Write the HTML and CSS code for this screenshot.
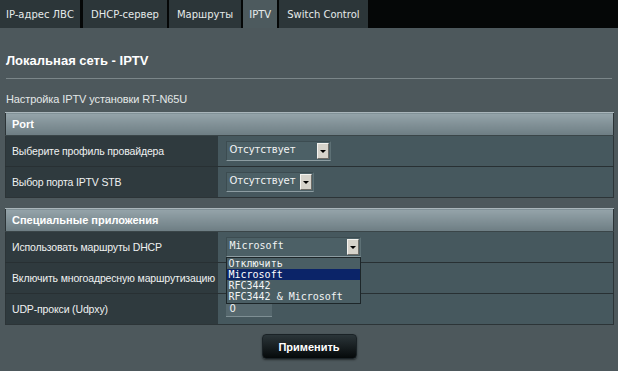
FILE: index.html
```html
<!DOCTYPE html>
<html lang="ru">
<head>
<meta charset="utf-8">
<title>Локальная сеть - IPTV</title>
<link rel="stylesheet" href="styles.css">
</head>
<body>
<div class="tabs">
  <div class="tab">IP-адрес ЛВС</div>
  <div class="tab">DHCP-сервер</div>
  <div class="tab">Маршруты</div>
  <div class="tab active">IPTV</div>
  <div class="tab">Switch Control</div>
</div>
<div class="content">
  <h1 class="title">Локальная сеть - IPTV</h1>
  <div class="rule"></div>
  <p class="desc">Настройка IPTV установки RT-N65U</p>

  <table class="form">
    <colgroup><col class="c-label"><col class="c-value"></colgroup>
    <thead><tr><th colspan="2">Port</th></tr></thead>
    <tbody>
      <tr>
        <td class="label">Выберите профиль провайдера</td>
        <td class="value"><div class="select s-prof"><span class="sel-text">Отсутствует</span><span class="sel-btn"><span class="arrow"></span></span></div></td>
      </tr>
      <tr>
        <td class="label">Выбор порта IPTV STB</td>
        <td class="value"><div class="select s-port"><span class="sel-text">Отсутствует</span><span class="sel-btn"><span class="arrow"></span></span></div></td>
      </tr>
    </tbody>
  </table>

  <table class="form second">
    <colgroup><col class="c-label"><col class="c-value"></colgroup>
    <thead><tr><th colspan="2">Специальные приложения</th></tr></thead>
    <tbody>
      <tr>
        <td class="label">Использовать маршруты DHCP</td>
        <td class="value">
          <div class="select s-dhcp mono"><span class="sel-text">Microsoft</span><span class="sel-btn"><span class="arrow"></span></span>
            <ul class="dropdown">
              <li>Отключить</li>
              <li class="hl">Microsoft</li>
              <li>RFC3442</li>
              <li>RFC3442 &amp; Microsoft</li>
            </ul>
          </div>
        </td>
      </tr>
      <tr>
        <td class="label">Включить многоадресную маршрутизацию</td>
        <td class="value"></td>
      </tr>
      <tr>
        <td class="label">UDP-прокси (Udpxy)</td>
        <td class="value"><div class="input">0</div></td>
      </tr>
    </tbody>
  </table>

  <div class="actions"><button class="apply">Применить</button></div>
</div>
</body>
</html>
```
FILE: styles.css
```css
html, body {
  margin: 0;
  padding: 0;
  background: #4d585c;
  width: 618px;
  height: 371px;
  overflow: hidden;
  font-family: "Liberation Sans", Arial, sans-serif;
  color: #e8ecec;
}

.tabs {
  display: flex;
  gap: 2px;
  height: 28px;
  background: #050707;
}
.tab {
  display: flex;
  align-items: center;
  padding: 0 8px;
  background: #2c3639;
  color: #e6eaea;
  font-family: "DejaVu Sans", Verdana, sans-serif;
  font-size: 10px;
  white-space: nowrap;
}
.tab:first-child { margin-right: 1px; padding: 0 6px; }
.tab.active { background: #4d5a5e; padding: 0 6px; }

.content {
  padding: 0 0 0 5px;
}
.title {
  margin: 0;
  padding: 25px 0 0 1px;
  height: 23px;
  font-size: 13px;
  font-weight: bold;
  color: #ffffff;
  line-height: 16px;
}
.rule {
  height: 1px;
  background: #7b8689;
  margin: 2px 6px 0 1px;
}
.desc {
  margin: 0;
  padding: 14px 0 0 1px;
  height: 19px;
  font-size: 11px;
  line-height: 13px;
  color: #e4e8e8;
  letter-spacing: -0.1px;
}

.form {
  width: 609px;
  table-layout: fixed;
  border-collapse: collapse;
  border: 1px solid #2c3437;
  margin: 0;
}
.c-label { width: 212px; }
.form.second { margin-top: 10px; }
.form th {
  height: 22px;
  padding: 0 0 0 6px;
  text-align: left;
  font-size: 11px;
  font-weight: bold;
  color: #ffffff;
  background: linear-gradient(#95a4aa, #6d7d83);
  border-top: 1px solid #a9b5ba;
  border-bottom: 1px solid #3a4548;
}
.form td {
  height: 30px;
  padding: 0;
  border-top: 1px solid #283033;
  font-size: 10.5px;
  color: #eef1f1;
  letter-spacing: -0.15px;
}
.form td.label {
  padding-left: 6px;
  background: #2f3a3e;
  white-space: nowrap;
  overflow: hidden;
}
.form td.value {
  background: #46585e;
  padding-left: 8px;
  vertical-align: middle;
  letter-spacing: 0;
}

.select {
  position: relative;
  display: flex;
  align-items: center;
  height: 18px;
  background: #4c6066;
  border-top: 1px solid #3c4c51;
  border-left: 1px solid #3c4c51;
  border-bottom: 1px solid #8d9da2;
  border-right: 1px solid #5d7075;
  font-family: "DejaVu Sans", Verdana, sans-serif;
  font-size: 10px;
  color: #f2f4f4;
}
.select.mono { font-family: "DejaVu Sans Mono", "Liberation Mono", monospace; }
.s-prof { width: 103px; }
.s-port { width: 86px; }
.s-dhcp { width: 133px; }
.sel-text {
  flex: 1;
  padding-left: 3px;
  white-space: nowrap;
  line-height: 14px;
  align-self: flex-start;
  padding-top: 1px;
}
.sel-btn {
  width: 12px;
  height: 16px;
  margin-right: 1px;
  background: #d6d3cb;
  border-top: 1px solid #f4f3ef;
  border-left: 1px solid #f4f3ef;
  border-bottom: 1px solid #6f6d68;
  border-right: 1px solid #6f6d68;
  display: flex;
  align-items: center;
  justify-content: center;
  box-sizing: border-box;
}
.arrow {
  width: 0;
  height: 0;
  border-left: 3px solid transparent;
  border-right: 3px solid transparent;
  border-top: 3px solid #000;
  margin-top: 1px;
}

.dropdown {
  position: absolute;
  left: -1px;
  top: 19px;
  width: 133px;
  margin: 0;
  padding: 0 0 1px 0;
  list-style: none;
  background: #4a5e64;
  border: 1px solid #1d2629;
  font-family: "DejaVu Sans Mono", "Liberation Mono", monospace;
  font-size: 10px;
  color: #f2f4f4;
  z-index: 5;
}
.dropdown li {
  height: 11px;
  line-height: 11px;
  padding-left: 2px;
  white-space: nowrap;
}
.dropdown li.hl { background: #0b2468; color: #ffffff; }

.input {
  width: 42px;
  height: 15px;
  padding-left: 4px;
  background: #56686e;
  border-bottom: 1px solid #7e8f94;
  font-family: "DejaVu Sans", Verdana, sans-serif;
  font-size: 10px;
  line-height: 15px;
  color: #f2f4f4;
}

.actions {
  display: flex;
  justify-content: center;
  padding-top: 9px;
  padding-right: 5px;
}
.apply {
  width: 95px;
  height: 25px;
  border: 1px solid #1a2226;
  border-radius: 4px;
  background: linear-gradient(#2b3539, #05090a);
  box-shadow: 0 1px 2px rgba(0,0,0,0.5);
  color: #ffffff;
  font-family: "Liberation Sans", Arial, sans-serif;
  font-size: 11px;
  font-weight: bold;
  padding: 0;
}
```
